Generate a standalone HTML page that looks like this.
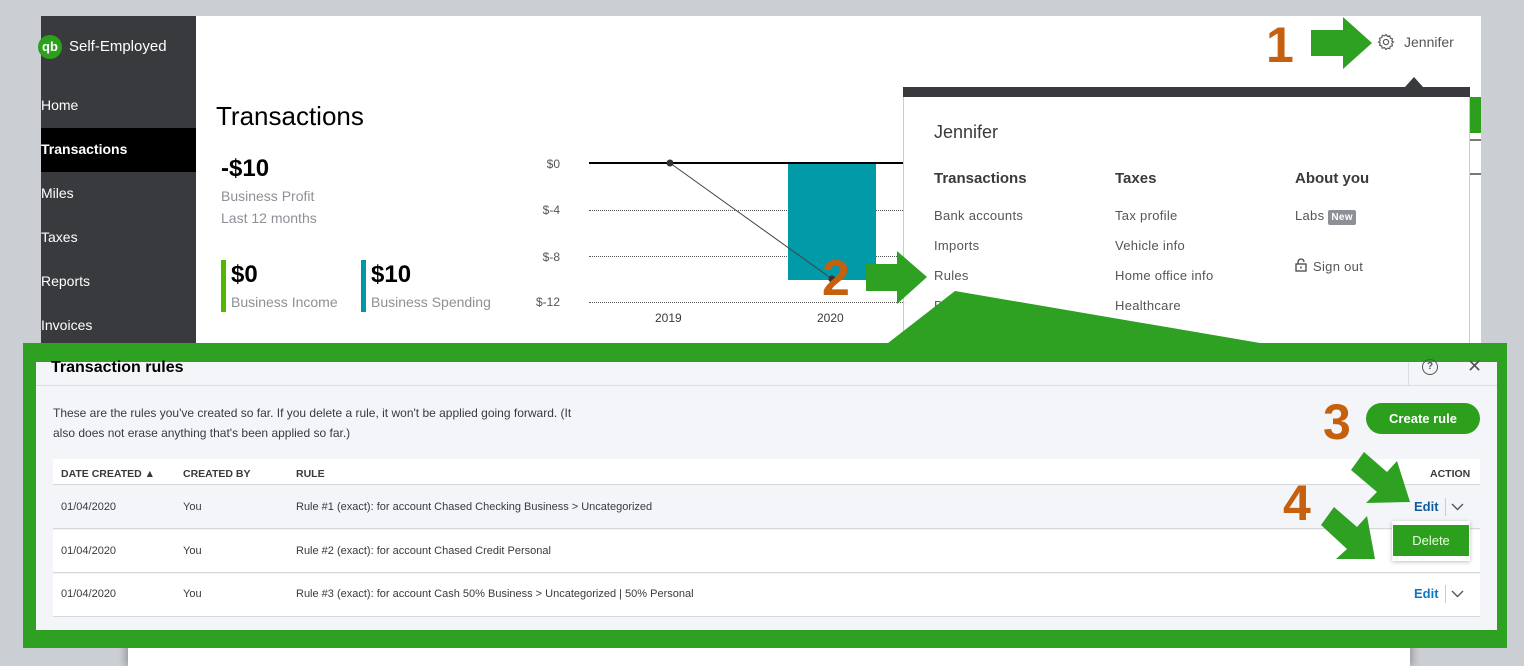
<!DOCTYPE html>
<html><head><meta charset="utf-8"><style>
*{margin:0;padding:0;box-sizing:border-box}
body{width:1524px;height:666px;background:#cbced3;font-family:"Liberation Sans",sans-serif;position:relative;overflow:hidden;color:#393a3d}
.a{position:absolute}
.nav{left:41px;color:#fff;font-size:14px}
.gl{font-size:12px;color:#555;right:0}
.dot{border-top:1px dotted #555;height:0}
.mi{font-size:13px;color:#555;letter-spacing:.3px}
.mh{font-size:15px;font-weight:bold;color:#393a3d}
.num{color:#c5600f;font-weight:bold;font-size:50px;line-height:1}
.th{font-size:10.5px;font-weight:bold;color:#393a3d}
.td{font-size:11px;color:#393a3d}
</style></head><body>
<div class="a" style="left:41px;top:16px;width:1440px;height:327px;background:#fff"></div>
<div class="a" style="left:41px;top:16px;width:155px;height:327px;background:#393a3d"></div>
<div class="a" style="left:41px;top:128px;width:155px;height:44px;background:#000"></div>
<div class="a" style="left:38px;top:35px;width:24px;height:24px;border-radius:50%;background:#2ca01c;color:#fff;font-size:13px;font-weight:bold;line-height:24px;text-align:center">qb</div>
<div class="a" style="left:69px;top:38px;color:#fff;font-size:15px">Self-Employed</div>
<div class="a nav" style="top:97px">Home</div>
<div class="a nav" style="top:141px;font-weight:bold">Transactions</div>
<div class="a nav" style="top:185px">Miles</div>
<div class="a nav" style="top:229px">Taxes</div>
<div class="a nav" style="top:273px">Reports</div>
<div class="a nav" style="top:317px">Invoices</div>

<div class="a" style="left:216px;top:101px;font-size:26px;color:#000">Transactions</div>
<div class="a" style="left:221px;top:155px;font-size:24px;font-weight:bold;color:#000">-$10</div>
<div class="a" style="left:221px;top:188px;font-size:14px;color:#8d9096">Business Profit</div>
<div class="a" style="left:221px;top:210px;font-size:14px;color:#8d9096">Last 12 months</div>
<div class="a" style="left:221px;top:260px;width:5px;height:52px;background:#53b700"></div>
<div class="a" style="left:231px;top:261px;font-size:24px;font-weight:bold;color:#000">$0</div>
<div class="a" style="left:231px;top:294px;font-size:14px;color:#8d9096">Business Income</div>
<div class="a" style="left:361px;top:260px;width:5px;height:52px;background:#0097a7"></div>
<div class="a" style="left:371px;top:261px;font-size:24px;font-weight:bold;color:#000">$10</div>
<div class="a" style="left:371px;top:294px;font-size:14px;color:#8d9096">Business Spending</div>

<div class="a gl" style="left:520px;width:40px;text-align:right;top:157px">$0</div>
<div class="a gl" style="left:520px;width:40px;text-align:right;top:203px">$-4</div>
<div class="a gl" style="left:520px;width:40px;text-align:right;top:250px">$-8</div>
<div class="a gl" style="left:520px;width:40px;text-align:right;top:295px">$-12</div>
<div class="a dot" style="left:589px;top:210px;width:314px"></div>
<div class="a dot" style="left:589px;top:256px;width:314px"></div>
<div class="a dot" style="left:589px;top:302px;width:314px"></div>
<div class="a" style="left:788px;top:163px;width:88px;height:117px;background:#009aa8"></div>
<div class="a" style="left:589px;top:162px;width:314px;height:2px;background:#000"></div>
<svg class="a" style="left:0;top:0" width="1524" height="666"><line x1="670" y1="163" x2="832" y2="279" stroke="#444" stroke-width="1"/><circle cx="670" cy="163" r="3.5" fill="#333"/><circle cx="832" cy="279" r="3.5" fill="#333"/></svg>
<div class="a" style="left:655px;top:311px;font-size:12px;color:#393a3d">2019</div>
<div class="a" style="left:817px;top:311px;font-size:12px;color:#393a3d">2020</div>

<svg class="a" style="left:1377px;top:33px" width="18" height="18" viewBox="0 0 24 24"><path d="M12 2l2 2.5 3-.8.6 3 3 .9-.9 3L22 12l-2.3 2 .9 3-3 .9-.6 3-3-.8L12 22l-2-2.5-3 .8-.6-3-3-.9.9-3L2 12l2.3-2-.9-3 3-.9.6-3 3 .8z" fill="none" stroke="#555" stroke-width="1.5"/><circle cx="12" cy="12" r="3.5" fill="none" stroke="#555" stroke-width="1.5"/></svg>
<div class="a" style="left:1404px;top:34px;font-size:14px;color:#555">Jennifer</div>

<div class="a" style="left:1470px;top:97px;width:11px;height:36px;background:#2ca01c"></div>
<div class="a" style="left:1470px;top:139px;width:11px;height:2px;background:#777"></div>
<div class="a" style="left:1470px;top:173px;width:11px;height:2px;background:#777"></div>

<div class="a" style="left:903px;top:87px;width:567px;height:256px;background:#fff;border-left:1px solid #ccc;border-right:1px solid #ccc"></div>
<div class="a" style="left:903px;top:87px;width:567px;height:10px;background:#393a3d"></div>
<div class="a" style="left:1405px;top:77px;width:0;height:0;border-left:9px solid transparent;border-right:9px solid transparent;border-bottom:10px solid #393a3d"></div>
<div class="a" style="left:934px;top:122px;font-size:18px;color:#393a3d">Jennifer</div>
<div class="a mh" style="left:934px;top:170px">Transactions</div>
<div class="a mh" style="left:1115px;top:170px">Taxes</div>
<div class="a mh" style="left:1295px;top:170px">About you</div>
<div class="a mi" style="left:934px;top:208px">Bank accounts</div>
<div class="a mi" style="left:934px;top:238px">Imports</div>
<div class="a mi" style="left:934px;top:268px">Rules</div>
<div class="a mi" style="left:934px;top:298px">Bank ... ding</div>
<div class="a mi" style="left:1115px;top:208px">Tax profile</div>
<div class="a mi" style="left:1115px;top:238px">Vehicle info</div>
<div class="a mi" style="left:1115px;top:268px">Home office info</div>
<div class="a mi" style="left:1115px;top:298px">Healthcare</div>
<div class="a mi" style="left:1295px;top:208px">Labs <span style="background:#8d9096;color:#fff;font-size:10px;font-weight:bold;padding:2px 3px;border-radius:2px">New</span></div>
<svg class="a" style="left:1295px;top:258px" width="12" height="14" viewBox="0 0 12 14"><path d="M3 6V4a3 3 0 0 1 6 0" fill="none" stroke="#444" stroke-width="1.3"/><rect x="1" y="6" width="10" height="7" fill="none" stroke="#444" stroke-width="1.3"/><rect x="5.3" y="8.5" width="1.4" height="2" fill="#444"/></svg>
<div class="a mi" style="left:1313px;top:259px">Sign out</div>

<div class="a" style="left:128px;top:640px;width:1282px;height:26px;background:#fff;box-shadow:-4px 0 6px rgba(0,0,0,.2),4px 0 6px rgba(0,0,0,.2)"></div>

<svg class="a" style="left:0;top:0" width="1524" height="666">
<polygon points="955,291 888,343 1260,343" fill="#2ea022"/>
<polygon points="1311,30 1343,30 1343,17 1372,43 1343,69 1343,56 1311,56" fill="#2ea022"/>
<polygon points="866,264 897,264 897,251 927,277 897,304 897,291 866,291" fill="#2ea022"/>
</svg>
<div class="a num" style="left:1266px;top:20px">1</div>
<div class="a num" style="left:822px;top:253px">2</div>

<div class="a" style="left:23px;top:343px;width:1484px;height:305px;background:#2ea022"></div>
<div class="a" style="left:36px;top:362px;width:1461px;height:268px;background:#f4f5f8"></div>
<div class="a" style="left:36px;top:385px;width:1461px;height:1px;background:#dcdde0"></div>
<div class="a" style="left:51px;top:359px;font-size:16px;font-weight:bold;color:#000">Transaction rules</div>
<div class="a" style="left:1408px;top:362px;width:1px;height:23px;background:#dcdde0"></div>
<div class="a" style="left:1422px;top:359px;width:16px;height:16px;border:1.5px solid #555;border-radius:50%;font-size:10px;text-align:center;line-height:13px;color:#555;font-weight:bold">?</div>
<div class="a" style="left:1467px;top:356px;font-size:18px;color:#555">✕</div>
<div class="a" style="left:53px;top:403px;font-size:12px;line-height:20px;color:#393a3d;width:535px">These are the rules you've created so far. If you delete a rule, it won't be applied going forward. (It also does not erase anything that's been applied so far.)</div>
<div class="a" style="left:1366px;top:403px;width:114px;height:31px;border-radius:16px;background:#2ca01c;color:#fff;font-size:13px;font-weight:bold;text-align:center;line-height:31px">Create rule</div>

<div class="a" style="left:53px;top:459px;width:1427px;height:26px;background:#fff;border-bottom:1px solid #d4d7dc"></div>
<div class="a th" style="left:61px;top:468px">DATE CREATED ▲</div>
<div class="a th" style="left:183px;top:468px">CREATED BY</div>
<div class="a th" style="left:296px;top:468px">RULE</div>
<div class="a th" style="left:1430px;top:468px">ACTION</div>

<div class="a" style="left:53px;top:486px;width:1427px;height:43px;background:#f4f5f8;border-bottom:1px solid #d4d7dc"></div>
<div class="a" style="left:53px;top:530px;width:1427px;height:43px;background:#fff;border-bottom:1px solid #d4d7dc"></div>
<div class="a" style="left:53px;top:574px;width:1427px;height:43px;background:#fff;border-bottom:1px solid #d4d7dc"></div>
<div class="a td" style="left:61px;top:501px">01/04/2020</div><div class="a td" style="left:183px;top:501px">You</div><div class="a td" style="left:296px;top:501px">Rule #1 (exact): for account Chased Checking Business &gt; Uncategorized</div>
<div class="a td" style="left:61px;top:545px">01/04/2020</div><div class="a td" style="left:183px;top:545px">You</div><div class="a td" style="left:296px;top:545px">Rule #2 (exact): for account Chased Credit Personal</div>
<div class="a td" style="left:61px;top:588px">01/04/2020</div><div class="a td" style="left:183px;top:588px">You</div><div class="a td" style="left:296px;top:588px">Rule #3 (exact): for account Cash 50% Business &gt; Uncategorized | 50% Personal</div>
<div class="a" style="left:1414px;top:499px;font-size:13px;font-weight:bold;color:#0d5d9e">Edit</div>
<div class="a" style="left:1445px;top:498px;width:1px;height:18px;background:#ccc"></div>
<svg class="a" style="left:1451px;top:503px" width="13" height="8"><path d="M1 1l5.5 5.5L12 1" fill="none" stroke="#555" stroke-width="1.4"/></svg>
<div class="a" style="left:1414px;top:586px;font-size:13px;font-weight:bold;color:#0d77c6">Edit</div>
<div class="a" style="left:1445px;top:585px;width:1px;height:18px;background:#ccc"></div>
<svg class="a" style="left:1451px;top:590px" width="13" height="8"><path d="M1 1l5.5 5.5L12 1" fill="none" stroke="#555" stroke-width="1.4"/></svg>
<div class="a" style="left:1392px;top:521px;width:78px;height:40px;background:#fff;box-shadow:0 1px 4px rgba(0,0,0,.25)"></div>
<div class="a" style="left:1393px;top:525px;width:76px;height:31px;background:#2ca01c;color:#e8ffe0;font-size:13px;text-align:center;line-height:31px">Delete</div>

<svg class="a" style="left:0;top:0" width="1524" height="666">
<polygon points="1364,452 1387,472 1397,461 1410,502 1366,503 1377,492 1351,470" fill="#2ea022"/>
<polygon points="1334,507 1357,527 1367,516 1375,559 1336,559 1347,549 1321,525" fill="#2ea022"/>
</svg>
<div class="a num" style="left:1323px;top:397px">3</div>
<div class="a num" style="left:1283px;top:478px">4</div>
</body></html>
